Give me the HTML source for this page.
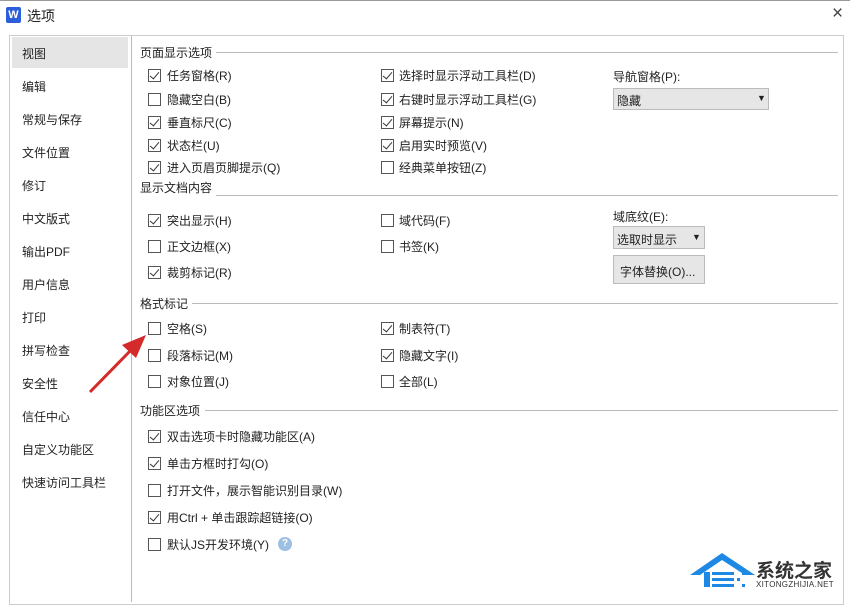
<!DOCTYPE html>
<html><head><meta charset="utf-8"><style>
body{margin:0;width:850px;height:602px;background:#fff;position:relative;overflow:hidden;font-family:"Liberation Sans","Noto Sans CJK SC",sans-serif;font-size:12px;color:#222}
.a{position:absolute;white-space:nowrap}
.cb{position:absolute;width:11px;height:11px;border:1px solid #555;background:#fff}
.cb.c::after{content:"";position:absolute;left:3px;top:0px;width:4px;height:8px;border:solid #333;border-width:0 1.5px 1.5px 0;transform:rotate(40deg)}
.hd{position:absolute;height:1px;background:#bbb}
.nav{position:absolute;left:22px;font-size:12px}
</style></head><body>
<div class="a" style="left:0;top:0;width:850px;height:1px;background:#999"></div>
<div class="a" style="left:6px;top:7px;width:15px;height:16px;background:#2b5fd9;color:#fff;font-weight:bold;font-size:11px;text-align:center;line-height:16px;border-radius:2px">W</div>
<div class="a" style="left:27px;top:6px;font-size:14px">选项</div>
<div class="a" style="left:832px;top:3px;font-size:19px;color:#444">×</div>
<div class="a" style="left:9px;top:35px;width:835px;height:570px;border:1px solid #ccc;box-sizing:border-box"></div>
<div class="a" style="left:131px;top:36px;width:1px;height:566px;background:#bbb"></div>
<div class="a" style="left:12px;top:37px;width:116px;height:31px;background:#e5e5e5"></div>
<div class="nav" style="top:45px">视图</div>
<div class="nav" style="top:78px">编辑</div>
<div class="nav" style="top:111px">常规与保存</div>
<div class="nav" style="top:144px">文件位置</div>
<div class="nav" style="top:177px">修订</div>
<div class="nav" style="top:210px">中文版式</div>
<div class="nav" style="top:243px">输出PDF</div>
<div class="nav" style="top:276px">用户信息</div>
<div class="nav" style="top:309px">打印</div>
<div class="nav" style="top:342px">拼写检查</div>
<div class="nav" style="top:375px">安全性</div>
<div class="nav" style="top:408px">信任中心</div>
<div class="nav" style="top:441px">自定义功能区</div>
<div class="nav" style="top:474px">快速访问工具栏</div>

<div class="a" style="left:140px;top:44px">页面显示选项</div><div class="hd" style="left:216px;top:52px;width:622px"></div>
<div class="a" style="left:140px;top:179px">显示文档内容</div><div class="hd" style="left:216px;top:195px;width:622px"></div>
<div class="a" style="left:140px;top:295px">格式标记</div><div class="hd" style="left:192px;top:303px;width:646px"></div>
<div class="a" style="left:140px;top:402px">功能区选项</div><div class="hd" style="left:205px;top:410px;width:633px"></div>

<div class="cb c" style="left:148px;top:69px"></div><div class="a" style="left:167px;top:67px">任务窗格(R)</div>
<div class="cb" style="left:148px;top:93px"></div><div class="a" style="left:167px;top:91px">隐藏空白(B)</div>
<div class="cb c" style="left:148px;top:116px"></div><div class="a" style="left:167px;top:114px">垂直标尺(C)</div>
<div class="cb c" style="left:148px;top:139px"></div><div class="a" style="left:167px;top:137px">状态栏(U)</div>
<div class="cb c" style="left:148px;top:161px"></div><div class="a" style="left:167px;top:159px">进入页眉页脚提示(Q)</div>
<div class="cb c" style="left:381px;top:69px"></div><div class="a" style="left:399px;top:67px">选择时显示浮动工具栏(D)</div>
<div class="cb c" style="left:381px;top:93px"></div><div class="a" style="left:399px;top:91px">右键时显示浮动工具栏(G)</div>
<div class="cb c" style="left:381px;top:116px"></div><div class="a" style="left:399px;top:114px">屏幕提示(N)</div>
<div class="cb c" style="left:381px;top:139px"></div><div class="a" style="left:399px;top:137px">启用实时预览(V)</div>
<div class="cb" style="left:381px;top:161px"></div><div class="a" style="left:399px;top:159px">经典菜单按钮(Z)</div>
<div class="a" style="left:613px;top:68px">导航窗格(P):</div>
<div class="a" style="left:613px;top:88px;width:156px;height:22px;background:#e6e6e6;border:1px solid #bbb;box-sizing:border-box"></div>
<div class="a" style="left:617px;top:92px">隐藏</div><div class="a" style="left:757px;top:93px;font-size:9px">▼</div>

<div class="cb c" style="left:148px;top:214px"></div><div class="a" style="left:167px;top:212px">突出显示(H)</div>
<div class="cb" style="left:148px;top:240px"></div><div class="a" style="left:167px;top:238px">正文边框(X)</div>
<div class="cb c" style="left:148px;top:266px"></div><div class="a" style="left:167px;top:264px">裁剪标记(R)</div>
<div class="cb" style="left:381px;top:214px"></div><div class="a" style="left:399px;top:212px">域代码(F)</div>
<div class="cb" style="left:381px;top:240px"></div><div class="a" style="left:399px;top:238px">书签(K)</div>
<div class="a" style="left:613px;top:208px">域底纹(E):</div>
<div class="a" style="left:613px;top:226px;width:92px;height:23px;background:#e6e6e6;border:1px solid #bbb;box-sizing:border-box"></div>
<div class="a" style="left:617px;top:231px">选取时显示</div><div class="a" style="left:692px;top:232px;font-size:9px">▼</div>
<div class="a" style="left:613px;top:255px;width:92px;height:29px;background:#e6e6e6;border:1px solid #bbb;box-sizing:border-box"></div>
<div class="a" style="left:620px;top:263px">字体替换(O)...</div>

<div class="cb" style="left:148px;top:322px"></div><div class="a" style="left:167px;top:320px">空格(S)</div>
<div class="cb" style="left:148px;top:349px"></div><div class="a" style="left:167px;top:347px">段落标记(M)</div>
<div class="cb" style="left:148px;top:375px"></div><div class="a" style="left:167px;top:373px">对象位置(J)</div>
<div class="cb c" style="left:381px;top:322px"></div><div class="a" style="left:399px;top:320px">制表符(T)</div>
<div class="cb c" style="left:381px;top:349px"></div><div class="a" style="left:399px;top:347px">隐藏文字(I)</div>
<div class="cb" style="left:381px;top:375px"></div><div class="a" style="left:399px;top:373px">全部(L)</div>

<div class="cb c" style="left:148px;top:430px"></div><div class="a" style="left:167px;top:428px">双击选项卡时隐藏功能区(A)</div>
<div class="cb c" style="left:148px;top:457px"></div><div class="a" style="left:167px;top:455px">单击方框时打勾(O)</div>
<div class="cb" style="left:148px;top:484px"></div><div class="a" style="left:167px;top:482px">打开文件，展示智能识别目录(W)</div>
<div class="cb c" style="left:148px;top:511px"></div><div class="a" style="left:167px;top:509px">用Ctrl + 单击跟踪超链接(O)</div>
<div class="cb" style="left:148px;top:538px"></div><div class="a" style="left:167px;top:536px">默认JS开发环境(Y)</div>
<div class="a" style="left:278px;top:537px;width:14px;height:14px;border-radius:50%;background:#9cc0e4;color:#fff;font-size:10px;text-align:center;line-height:14px;font-weight:bold">?</div>

<svg class="a" style="left:0;top:0" width="850" height="602">
<line x1="90" y1="392" x2="132" y2="349" stroke="#d42a2a" stroke-width="3"/>
<polygon points="146,335 122,345 136,358" fill="#d42a2a"/>
<g fill="#1e88e5">
<polygon points="690,575 722,553 755,575 745,575 722,560 700,575"/>
<rect x="704" y="572" width="6" height="15"/>
<rect x="712" y="572" width="22" height="3"/><rect x="712" y="578" width="22" height="3"/><rect x="712" y="584" width="22" height="3"/>
<rect x="737" y="566" width="3" height="3"/><rect x="742" y="572" width="3" height="3"/><rect x="737" y="578" width="3" height="3"/><rect x="742" y="584" width="3" height="3"/>
</g>
</svg>
<div class="a" style="left:756px;top:556px;font-size:19px;font-weight:bold;color:#333">系统之家</div>
<div class="a" style="left:756px;top:580px;font-size:8px;color:#333;letter-spacing:0.3px">XITONGZHIJIA.NET</div>
</body></html>
